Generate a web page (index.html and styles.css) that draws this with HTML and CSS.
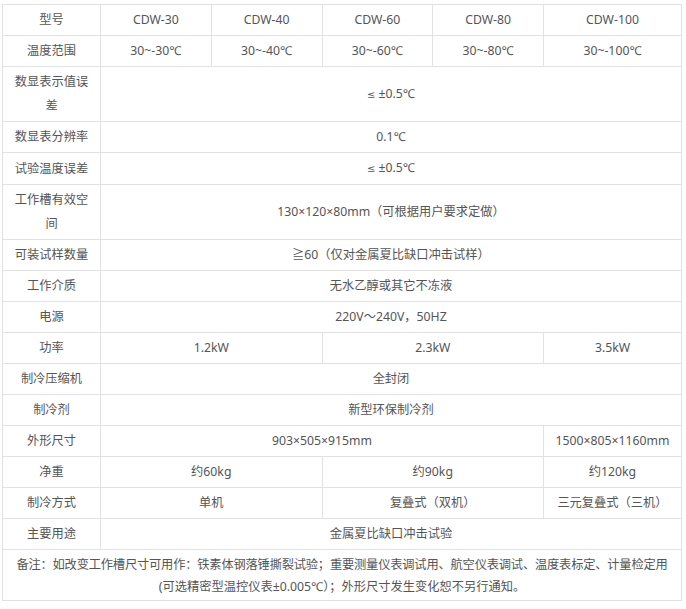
FILE: index.html
```html
<!DOCTYPE html>
<html lang="zh">
<head>
<meta charset="utf-8">
<title>CDW</title>
<link rel="stylesheet" href="styles.css">
</head>
<body>
<div class="wrap">
<table class="spec">
<colgroup>
<col class="c-label">
<col class="c-std">
<col class="c-std">
<col class="c-std">
<col class="c-std">
<col class="c-wide">
</colgroup>
<tbody>
<tr><td>型号</td><td>CDW-30</td><td>CDW-40</td><td>CDW-60</td><td>CDW-80</td><td>CDW-100</td></tr>
<tr><td>温度范围</td><td>30~-30℃</td><td>30~-40℃</td><td>30~-60℃</td><td>30~-80℃</td><td>30~-100℃</td></tr>
<tr><td>数显表示值误差</td><td colspan="5"><span class="le">≤</span> ±0.5℃</td></tr>
<tr><td>数显表分辨率</td><td colspan="5">0.1℃</td></tr>
<tr><td>试验温度误差</td><td colspan="5"><span class="le">≤</span> ±0.5℃</td></tr>
<tr><td>工作槽有效空间</td><td colspan="5">130×120×80mm（可根据用户要求定做）</td></tr>
<tr><td>可装试样数量</td><td colspan="5">≧60（仅对金属夏比缺口冲击试样）</td></tr>
<tr><td>工作介质</td><td colspan="5">无水乙醇或其它不冻液</td></tr>
<tr><td>电源</td><td colspan="5">220V～240V，50HZ</td></tr>
<tr><td>功率</td><td colspan="2">1.2kW</td><td colspan="2">2.3kW</td><td>3.5kW</td></tr>
<tr><td>制冷压缩机</td><td colspan="5">全封闭</td></tr>
<tr><td>制冷剂</td><td colspan="5">新型环保制冷剂</td></tr>
<tr><td>外形尺寸</td><td colspan="4">903×505×915mm</td><td>1500×805×1160mm</td></tr>
<tr><td>净重</td><td colspan="2">约60kg</td><td colspan="2">约90kg</td><td>约120kg</td></tr>
<tr><td>制冷方式</td><td colspan="2">单机</td><td colspan="2">复叠式（双机）</td><td>三元复叠式（三机）</td></tr>
<tr><td>主要用途</td><td colspan="5">金属夏比缺口冲击试验</td></tr>
<tr><td colspan="6" class="note"><span class="tight">备注：如改变工作槽尺寸可用作：铁素体钢落锤撕裂试验；重要测量仪表调试用、航空仪表调试、温度表标定、计量检定用</span><br>(可选精密型温控仪表±0.005℃）；外形尺寸发生变化恕不另行通知。</td></tr>
</tbody>
</table>
</div>
</body>
</html>
```

FILE: styles.css
```css
html, body {
  margin: 0;
  padding: 0;
  background: #ffffff;
}

.wrap {
  padding: 4px 0 0 2px;
}

.spec {
  border-collapse: collapse;
  table-layout: fixed;
  width: 680px;
  font-family: "Noto Sans", "Noto Sans CJK SC", sans-serif;
  font-size: 12.25px;
  color: #555555;
}

.c-label { width: 98px; }
.c-std { width: 110.75px; }
.c-wide { width: 138px; }

.spec td {
  border: 1px solid #e2e2e2;
  padding: 3px 8px;
  line-height: 24px;
  text-align: center;
  vertical-align: middle;
  word-break: break-all;
}

.spec td.note {
  padding: 4px 4px 2px;
  line-height: 22px;
}

.le {
  font-family: "DejaVu Sans", sans-serif;
  font-size: 10px;
}

.tight {
  letter-spacing: -0.19px;
}
```
